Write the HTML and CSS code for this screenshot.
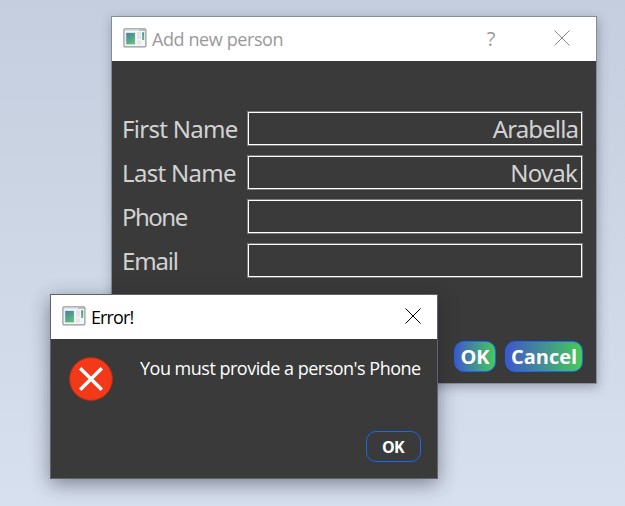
FILE: index.html
```html
<!DOCTYPE html>
<html lang="en">
<head>
<meta charset="utf-8">
<title>Add new person</title>
<link rel="stylesheet" href="styles.css">
</head>
<body>
<svg class="defs" width="0" height="0">
  <defs>
    <linearGradient id="pane" x1="0" y1="0" x2="0.5" y2="1"><stop offset="0" stop-color="#467fa0"/><stop offset="1" stop-color="#5fb97c"/></linearGradient>
    <symbol id="app" viewBox="0 0 24 20">
      <rect x="0.9" y="0.9" width="22" height="18" rx="1.2" fill="#f5f6f7" stroke="#92989e" stroke-width="1.2"/>
      <path d="M2 2.2h13.500" stroke="#d6dce4" stroke-width="1.200"/>
      <path d="M16 2.200h6" stroke="#a5b0bd" stroke-width="1.200"/>
      <rect x="2.500" y="4" width="10" height="13" fill="#dce5e4"/>
      <rect x="3.300" y="5" width="8.600" height="11.200" fill="url(#pane)"/>
      <path d="M14 4h4v7h-4zM14 12.500h4v4h-4z" fill="#e5e5e5"/>
      <rect x="19.200" y="4.300" width="2" height="7.700" fill="url(#pane)"/>
    </symbol>
  </defs>
</svg>
<main class="desktop">
  <section class="window person">
    <header class="titlebar">
      <svg class="app-icon"><use href="#app"/></svg>
      <h1 class="title">Add new person</h1>
      <span class="help">?</span>
      <svg class="close" viewBox="0 0 16 16"><path d="M.5.5l15 15M15.500.5l-15 15"/></svg>
    </header>
    <form class="form">
      <label class="row"><span class="label l1">First Name</span><span class="field f1">Arabella</span></label>
      <label class="row"><span class="label l2">Last Name</span><span class="field f2">Novak</span></label>
      <label class="row"><span class="label l3">Phone</span><span class="field"></span></label>
      <label class="row"><span class="label l4">Email</span><span class="field"></span></label>
    </form>
    <footer class="actions">
      <button class="btn ok">OK</button>
      <button class="btn cancel">Cancel</button>
    </footer>
  </section>
  <section class="window error">
    <header class="titlebar">
      <svg class="app-icon"><use href="#app"/></svg>
      <h1 class="title">Error!</h1>
      <svg class="close" viewBox="0 0 16 16"><path d="M.5.5l15 15M15.500.5l-15 15"/></svg>
    </header>
    <div class="message">
      <svg class="error-icon" viewBox="0 0 44 44"><circle cx="22" cy="22" r="21.400" fill="#f23a1a" stroke="#b92d15" stroke-width="1"/><path d="M11.200 11.200l21.600 21.600M32.800 11.200L11.200 32.800" stroke="#fff" stroke-width="3.400"/></svg>
      <p class="text">You must provide a person's Phone</p>
    </div>
    <footer class="actions"><button class="btn confirm">OK</button></footer>
  </section>
</main>
</body>
</html>
```
FILE: styles.css
```css
* { box-sizing: border-box; }
body { margin: 0; font-family: "Open Sans", "Noto Sans", sans-serif; }
.defs { position: absolute; }
.desktop {
  position: relative;
  height: 506px;
  overflow: hidden;
  background: linear-gradient(#c5cede, #cdd7e6 50%, #d7e0ef);
}
.window { position: absolute; display: flex; flex-direction: column; background: #3a3a3a; }
.person {
  left: 111px; top: 16px; width: 486px; height: 368px;
  border: 1px solid #858d98;
  box-shadow: 1px 3px 10px rgba(50, 50, 70, .35);
}
.error {
  left: 50px; top: 294px; width: 388px; height: 185px;
  border: 1px solid #606369;
  box-shadow: 0 5px 18px rgba(30, 30, 45, .48);
}
.titlebar { display: flex; align-items: center; height: 44px; flex: none; padding-left: 11px; background: #fff; }
.person .titlebar { color: #999; }
.app-icon { width: 24px; height: 20px; margin-top: -3px; }
.title { margin: 0 0 0 5px; font-size: 18px; font-weight: 400; line-height: 24px; white-space: nowrap; }
.person .title { letter-spacing: -.4px; }
.error .title { letter-spacing: -.9px; color: #000; }
.help { margin-left: auto; font-size: 20px; line-height: 24px; width: 10px; text-align: center; }
.close { width: 16px; height: 16px; stroke: #888; stroke-width: 1; }
.person .close { margin: -2px 26px 0 58px; }
.error .close { margin: -2px 16px 0 auto; stroke: #000; }
.form { display: flex; flex-direction: column; gap: 9px; margin: 50px 13px 0 10px; }
.row { display: flex; height: 35px; color: #d2d2d2; font: 24px/35px "Noto Sans", sans-serif; }
.label { width: 125px; flex: none; white-space: nowrap; }
.l1 { letter-spacing: -.7px; }
.l2 { letter-spacing: -.7px; }
.l3 { letter-spacing: -1.5px; }
.l4 { letter-spacing: -1.2px; }
.field {
  flex: 1;
  padding-right: 4px;
  border: 1px solid #7a7a7a;
  outline: 1px solid #fff;
  outline-offset: -2px;
  line-height: 33px;
  text-align: right;
}
.f1 { letter-spacing: -.9px; }
.f2 { letter-spacing: -.8px; padding-right: 5px; }
.actions { display: flex; justify-content: flex-end; margin-top: auto; }
.person .actions { gap: 9px; padding: 0 13px 11px; }
.error .actions { padding: 0 16px 16px; }
.btn {
  height: 31px;
  padding: 0;
  border: 1px solid #1769ee;
  border-radius: 10px;
  background: linear-gradient(90deg, #4055cc, #46cc57) border-box;
  color: #fff;
  font: 700 20px/28px "Open Sans", sans-serif;
  text-align: center;
}
.ok { width: 42px; }
.cancel { width: 78px; }
.confirm { width: 55px; padding-right: 1px; background: none; font-size: 16px; letter-spacing: -.6px; }
.message { display: flex; align-items: flex-start; padding: 18px 0 0 18px; }
.error-icon { width: 44px; height: 44px; }
.text { margin: -1px 0 0 27px; color: #fff; font-size: 18px; line-height: 24px; letter-spacing: -.5px; white-space: nowrap; }
```
